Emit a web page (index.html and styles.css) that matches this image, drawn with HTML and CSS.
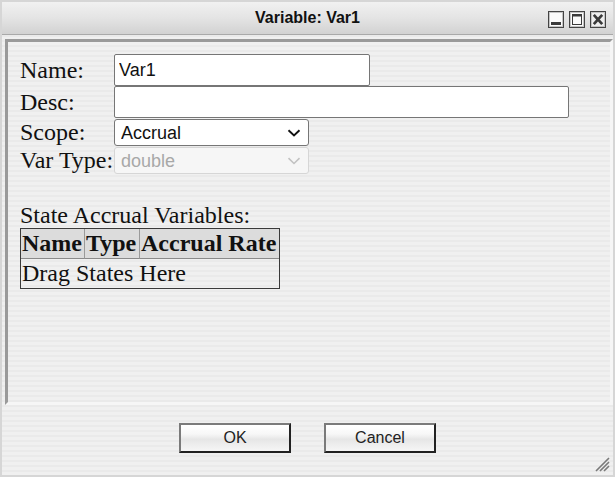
FILE: index.html
```html
<!DOCTYPE html>
<html>
<head>
<meta charset="utf-8">
<link rel="stylesheet" href="styles.css">
</head>
<body>
<div class="window">
  <div class="titlebar">
    <span class="spacer"></span>
    <span class="title">Variable: Var1</span>
    <span class="controls">
      <svg class="ctl" width="16" height="17" viewBox="0 0 16 17">
        <rect x="0.5" y="0.5" width="15" height="16" fill="#c4c4c4" stroke="#444"/>
        <rect x="2" y="2" width="12" height="13" fill="#fafafa"/>
        <rect x="3" y="11" width="10" height="3" fill="#3a3a3a"/>
      </svg>
      <svg class="ctl" width="16" height="17" viewBox="0 0 16 17">
        <rect x="0.5" y="0.5" width="15" height="16" fill="#c4c4c4" stroke="#444"/>
        <rect x="2" y="2" width="12" height="13" fill="#fafafa"/>
        <rect x="3.5" y="3.5" width="9" height="10" fill="none" stroke="#3a3a3a"/>
        <rect x="3" y="3" width="10" height="2.5" fill="#3a3a3a"/>
      </svg>
      <svg class="ctl" width="16" height="17" viewBox="0 0 16 17">
        <rect x="0.5" y="0.5" width="15" height="16" fill="#c4c4c4" stroke="#444"/>
        <rect x="2" y="2" width="12" height="13" fill="#eeeeee"/>
        <path d="M3.8 3.8 L12.2 13.2 M12.2 3.8 L3.8 13.2" stroke="#3a3a3a" stroke-width="2.7"/>
      </svg>
    </span>
  </div>

  <div class="panel">
    <div class="form">
      <label class="lbl">Name:</label>
      <input class="field field-name" type="text" value="Var1">
      <label class="lbl">Desc:</label>
      <input class="field field-desc" type="text" value="">
      <label class="lbl">Scope:</label>
      <span class="selwrap">
        <select class="pick"><option>Accrual</option></select>
        <svg class="chev" width="14" height="8" viewBox="0 0 14 8"><path d="M1.5 1.2 L7 6.5 L12.5 1.2" fill="none" stroke="#111" stroke-width="1.9"/></svg>
      </span>
      <label class="lbl">Var Type:</label>
      <span class="selwrap">
        <select class="pick" disabled><option>double</option></select>
        <svg class="chev" width="14" height="8" viewBox="0 0 14 8"><path d="M1.5 1.2 L7 6.5 L12.5 1.2" fill="none" stroke="#c2c2c2" stroke-width="1.6"/></svg>
      </span>
    </div>

    <div class="section-title">State Accrual Variables:</div>
    <table class="states">
      <thead>
        <tr>
          <th class="c1">Name</th>
          <th class="c2">Type</th>
          <th class="c3">Accrual Rate</th>
        </tr>
      </thead>
      <tbody>
        <tr><td colspan="3">Drag States Here</td></tr>
      </tbody>
    </table>
  </div>

  <div class="buttons">
    <button class="btn">OK</button>
    <button class="btn">Cancel</button>
  </div>

  <svg class="grip" width="17" height="17" viewBox="0 0 17 17">
    <path d="M16 3 L3 16 M16 7 L7 16 M16 11 L11 16" stroke="#7a7a7a" stroke-width="1.6"/>
  </svg>
</div>
</body>
</html>
```

FILE: styles.css
```css
html, body {
  margin: 0;
  padding: 0;
}

body {
  width: 615px;
  height: 477px;
  overflow: hidden;
  background: #e6e6e6;
}

.window {
  position: relative;
  box-sizing: border-box;
  width: 615px;
  height: 477px;
  border: 2px solid #d6d6d6;
  background: repeating-linear-gradient(to bottom, #f0f0f0 0 3px, #eaeaea 3px 5px);
  font-family: "Liberation Serif", "Times New Roman", serif;
}

.titlebar {
  height: 32px;
  display: grid;
  grid-template-columns: 1fr auto 1fr;
  align-items: center;
  background: linear-gradient(to bottom, #f1f1f1 0%, #e4e4e4 50%, #d2d2d2 100%);
  border-bottom: 1px solid #a9a9a9;
}

.title {
  font-family: "Liberation Sans", Arial, sans-serif;
  font-weight: bold;
  font-size: 16px;
  color: #111;
}

.controls {
  justify-self: end;
  display: flex;
  gap: 5px;
  margin-right: 7px;
  margin-top: 3px;
}

.ctl {
  display: block;
}

.panel {
  box-sizing: border-box;
  height: 366px;
  margin: 4px 0 0 3px;
  border: 3px solid;
  border-color: #9a9a9a #f6f6f6 #f6f6f6 #9a9a9a;
  padding: 12px 0 0 12px;
}

.form {
  display: grid;
  grid-template-columns: 94px 1fr;
  align-items: center;
}

.lbl {
  font-size: 24px;
  color: #111;
  line-height: 26px;
  white-space: nowrap;
}

.field {
  box-sizing: border-box;
  height: 32px;
  border: 1px solid #767676;
  border-radius: 2px;
  padding: 0 4px;
  font-family: "Liberation Sans", Arial, sans-serif;
  font-size: 18px;
  color: #111;
  background: #fff;
  justify-self: start;
  margin: 0;
}

.field-name {
  width: 256px;
}

.field-desc {
  width: 455px;
}

.selwrap {
  position: relative;
  justify-self: start;
  display: block;
  width: 195px;
  height: 27px;
  margin-top: 1px;
}

.pick {
  -webkit-appearance: none;
  appearance: none;
  box-sizing: border-box;
  display: block;
  width: 195px;
  height: 27px;
  margin: 0;
  border: 1px solid #767676;
  border-radius: 3px;
  background: #fff;
  font-family: "Liberation Sans", Arial, sans-serif;
  font-size: 18px;
  color: #111;
  padding: 0 0 0 6px;
}

.pick:disabled {
  border-color: #d6d6d6;
  background: #f6f6f6;
  color: #a8a8a8;
  opacity: 1;
}

.chev {
  position: absolute;
  right: 8px;
  top: 10px;
  pointer-events: none;
}

.section-title {
  margin-top: 28px;
  font-size: 24px;
  line-height: 26px;
  color: #111;
}

.states {
  box-sizing: border-box;
  width: 260px;
  table-layout: fixed;
  border-collapse: separate;
  border-spacing: 0;
  border: 1px solid #3a3a3a;
  font-size: 24px;
  color: #111;
}

.states th {
  box-sizing: border-box;
  background: #dcdcdc;
  font-weight: bold;
  text-align: left;
  padding: 1px 0 1px 1px;
  line-height: 27px;
  border-bottom: 1px solid #8a8a8a;
  white-space: nowrap;
}

.states th.c1 { width: 64px; border-right: 1px solid #9a9a9a; }
.states th.c2 { width: 55px; border-right: 1px solid #9a9a9a; }
.states th.c3 { width: 139px; }

.states td {
  padding: 1px 0 1px 1px;
  line-height: 27px;
  background: transparent;
}

.buttons {
  display: flex;
  justify-content: center;
  gap: 33px;
  margin-top: 18px;
}

.btn {
  box-sizing: border-box;
  width: 112px;
  height: 30px;
  border: 2px solid;
  border-color: #7a7a7a #222 #222 #7a7a7a;
  background: linear-gradient(to bottom, #ffffff 0%, #f7f7f7 35%, #e6e6e6 55%, #efefef 80%, #f6f6f6 100%);
  font-family: "Liberation Sans", Arial, sans-serif;
  font-size: 16px;
  color: #222;
  padding: 0;
}

.grip {
  position: absolute;
  right: 3px;
  bottom: 3px;
}
```
